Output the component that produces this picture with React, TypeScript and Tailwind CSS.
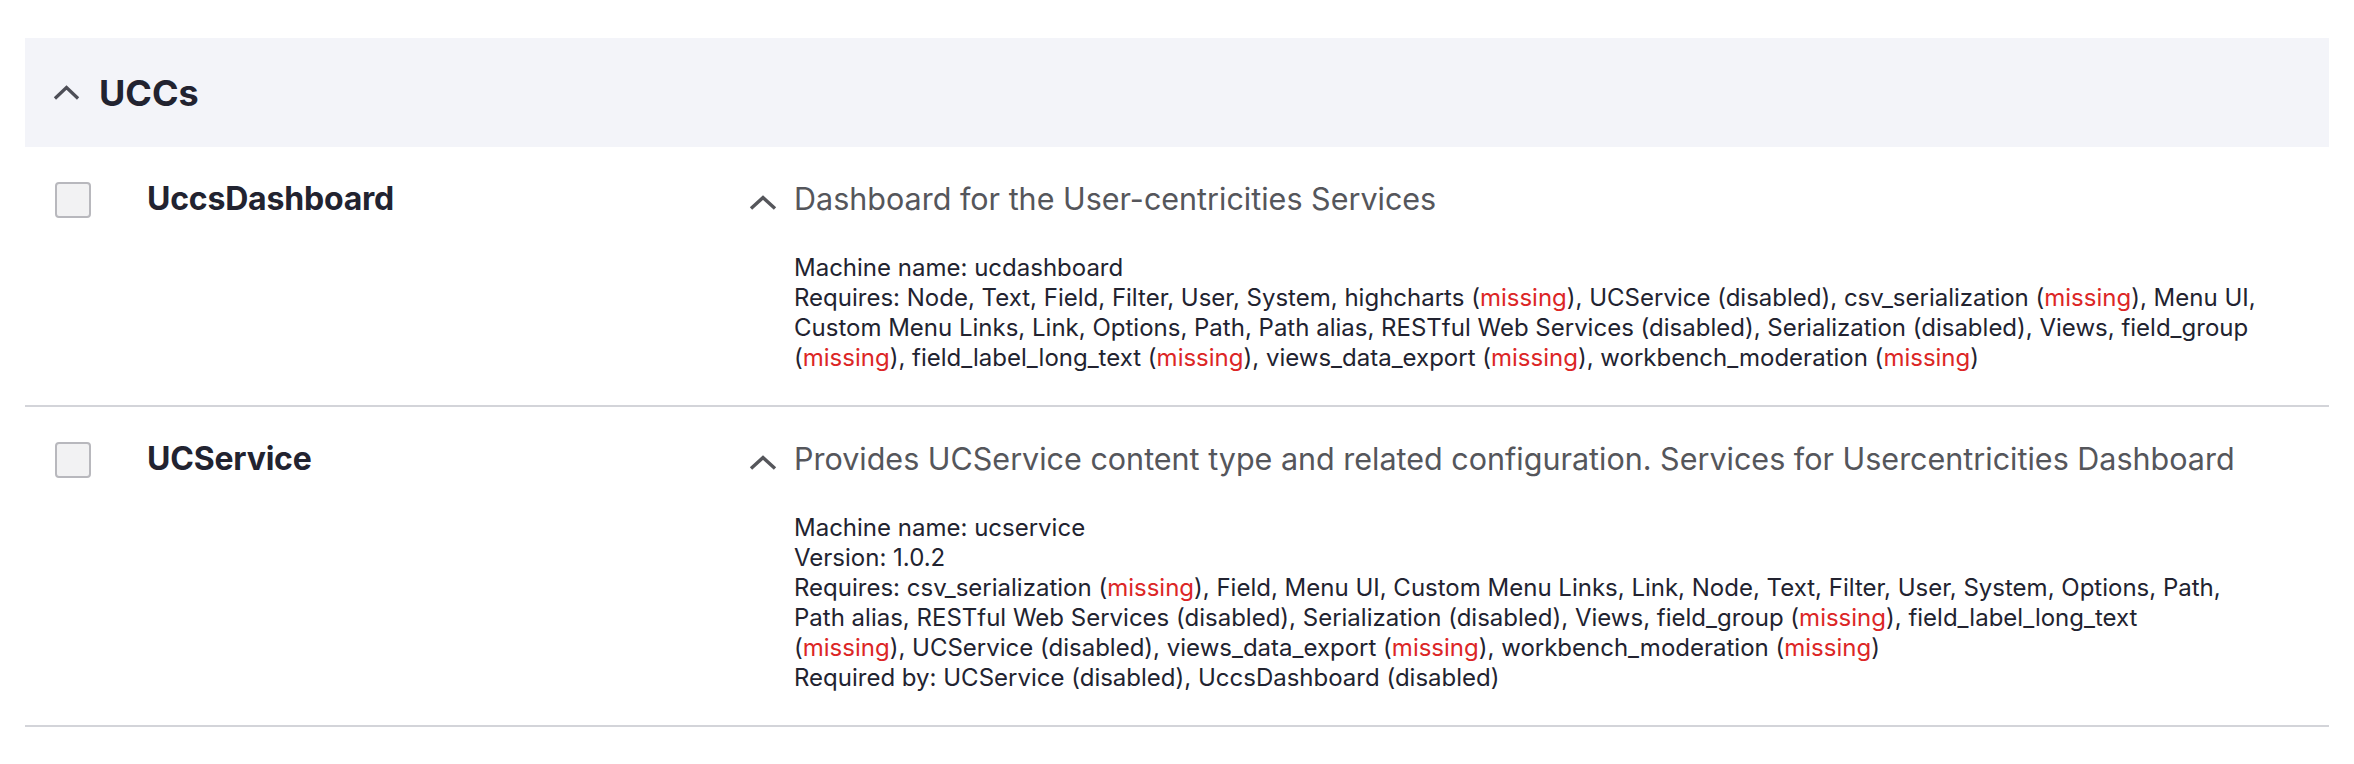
import React from "react";

// "missing" renders red, "br" forces a wrap where the real page wraps
type Part = string | "__missing" | "__br";

interface Module {
  id: string;
  name: string;
  description: string;
  details: { label: string; parts: Part[] }[];
}

const M = "__missing" as const;
const BR = "__br" as const;

const modules: Module[] = [
  {
    id: "ucdashboard",
    name: "UccsDashboard",
    description: "Dashboard for the User-centricities Services",
    details: [
      { label: "Machine name", parts: ["ucdashboard"] },
      {
        label: "Requires",
        parts: [
          "Node, Text, Field, Filter, User, System, highcharts (", M,
          "), UCService (disabled), csv_serialization (", M, "), Menu UI,", BR,
          "Custom Menu Links, Link, Options, Path, Path alias, RESTful Web Services (disabled), Serialization (disabled), Views, field_group", BR,
          "(", M, "), field_label_long_text (", M, "), views_data_export (", M,
          "), workbench_moderation (", M, ")",
        ],
      },
    ],
  },
  {
    id: "ucservice",
    name: "UCService",
    description: "Provides UCService content type and related configuration. Services for Usercentricities Dashboard",
    details: [
      { label: "Machine name", parts: ["ucservice"] },
      { label: "Version", parts: ["1.0.2"] },
      {
        label: "Requires",
        parts: [
          "csv_serialization (", M,
          "), Field, Menu UI, Custom Menu Links, Link, Node, Text, Filter, User, System, Options, Path,", BR,
          "Path alias, RESTful Web Services (disabled), Serialization (disabled), Views, field_group (", M, "), field_label_long_text", BR,
          "(", M, "), UCService (disabled), views_data_export (", M,
          "), workbench_moderation (", M, ")",
        ],
      },
      { label: "Required by", parts: ["UCService (disabled), UccsDashboard (disabled)"] },
    ],
  },
];

const Chevron = ({ className }: { className?: string }) => (
  <svg viewBox="0 0 28 15" className={className} fill="none" preserveAspectRatio="none">
    <path d="M2 13.5 L14 2.5 L26 13.5" stroke="currentColor" strokeWidth="3.4" />
  </svg>
);

const ModuleRow = ({ mod }: { mod: Module }) => (
  <div className="flex items-start border-b-2 border-[#d3d4d9] pl-[30px] pr-[28px] pt-[34px] pb-[32px]">
    <input
      type="checkbox"
      aria-label={mod.name}
      className="mt-[1px] h-[36px] w-[36px] shrink-0 appearance-none rounded-[4px] border-2 border-[#b8b8bd] bg-[#f2f2f3]"
    />
    <div className="ml-[56px] w-[602px] shrink-0 text-[32px] font-bold leading-[36px] tracking-[-0.2px] text-[#222330]">
      {mod.name}
    </div>
    <div className="flex min-w-0 flex-1 items-start">
      <Chevron className="mt-[14px] h-[15px] w-[28px] shrink-0 text-[#55565b]" />
      <div className="ml-[17px] min-w-0 flex-1">
        <div className="text-[30.5px] leading-[36px] text-[#55565b]">{mod.description}</div>
        <div className="mt-[36px] text-[24px] leading-[30px] text-[#222330]">
          {mod.details.map((d) => (
            <div key={d.label}>
              {d.label}:{" "}
              {d.parts.map((p, i) => {
                if (p === M) return <span key={i} className="text-[#dc2626]">missing</span>;
                if (p === BR) return <br key={i} />;
                return <React.Fragment key={i}>{p}</React.Fragment>;
              })}
            </div>
          ))}
        </div>
      </div>
    </div>
  </div>
);

export default function App() {
  return (
    <div className="min-h-screen bg-white px-[25px] pt-[38px] font-['Inter',sans-serif] antialiased">
      <div className="flex h-[109px] items-center bg-[#f3f4f9] pl-[28px]">
        <Chevron className="h-[15px] w-[27px] text-[#4d4e57]" />
        <h2 className="ml-[19px] text-[36px] font-bold leading-none text-[#222330]">UCCs</h2>
      </div>
      {modules.map((m) => (
        <ModuleRow key={m.id} mod={m} />
      ))}
    </div>
  );
}
